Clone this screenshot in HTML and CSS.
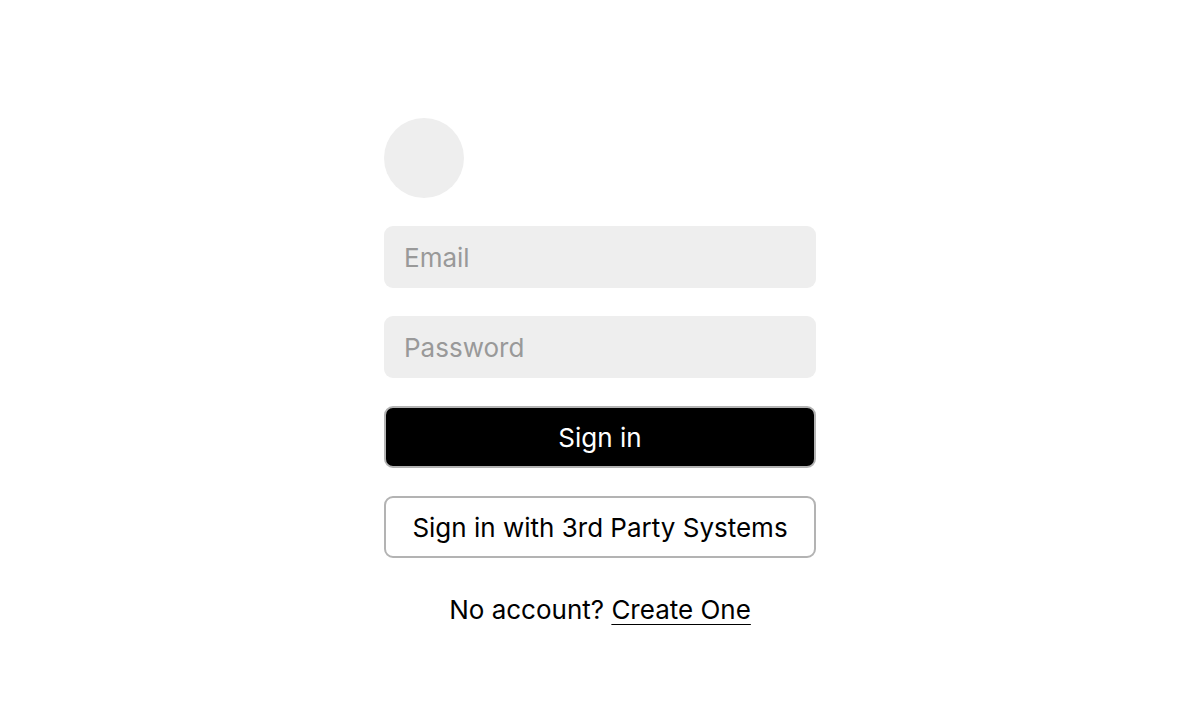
FILE: index.html
```html
<!DOCTYPE html>
<html>
<head>
<meta charset="utf-8">
<link rel="stylesheet" href="styles.css">
</head>
<body>
<main class="page">
  <form class="card">
    <div class="avatar"></div>
    <input class="field" type="email" placeholder="Email">
    <input class="field" type="password" placeholder="Password">
    <button class="btn btn-primary" type="button">Sign in</button>
    <button class="btn btn-outline" type="button">Sign in with 3rd Party Systems</button>
    <p class="signup">No account? <a class="link" href="#">Create One</a></p>
  </form>
</main>
</body>
</html>
```
FILE: styles.css
```css
* { box-sizing: border-box; }
html, body { margin: 0; padding: 0; background: #fff; }
body { font-family: Inter, "Noto Sans", sans-serif; color: #000; }
.page { display: flex; justify-content: center; padding-top: 118px; }
.card { width: 432px; display: flex; flex-direction: column; gap: 28px; }
.avatar { width: 80px; height: 80px; border-radius: 50%; background: #eeeeee; }
.field {
  height: 62px; border: none; border-radius: 9px; background: #eeeeee;
  padding: 0 20px; font-family: inherit; font-size: 26px; color: #000; outline: none;
}
.field::placeholder { color: #999999; }
.btn {
  height: 62px; border-radius: 9px; border: 2px solid #b3b3b3;
  font-family: inherit; font-size: 26px; cursor: pointer;
}
.btn-primary { background: #000; color: #fff; }
.btn-outline { background: #fff; color: #000; }
.signup { margin: 8px 0 0; text-align: center; font-size: 26px; line-height: 31px; }
.link {
  color: #000; text-decoration: underline; text-decoration-thickness: 2px;
  text-underline-offset: 5px;
}
```
